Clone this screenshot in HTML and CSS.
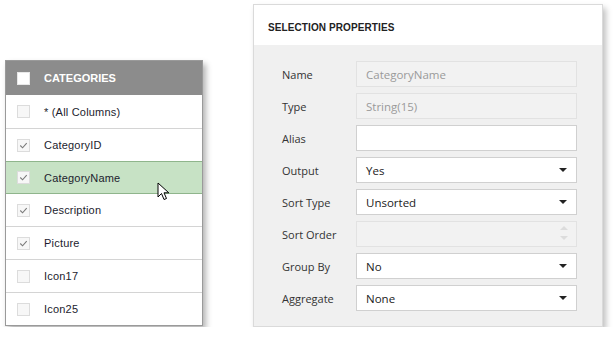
FILE: index.html
```html
<!DOCTYPE html>
<html>
<head>
    <meta charset="UTF-8">
    <title>Selection Properties</title>
    <link rel="stylesheet" href="styles.css">
</head>
<body>
    <div class="stage">
        <div class="categories">
            <div class="cat-head">
                <span class="box head-box"></span>
                <span>CATEGORIES</span>
            </div>
            <div class="cat-row"><span class="box"></span>* (All Columns)</div>
            <div class="cat-row"><span class="box"><svg viewBox="0 0 12 12"><polyline points="2.5,6 5,8.5 9.5,3.5"/></svg></span>CategoryID</div>
            <div class="cat-row selected"><span class="box"><svg viewBox="0 0 12 12"><polyline points="2.5,6 5,8.5 9.5,3.5"/></svg></span>CategoryName
                <svg class="pointer" width="14" height="20" viewBox="0 0 14 20"><path d="M1 1 L1 15 L4.5 11.5 L7 17.5 L9.5 16.5 L7 10.8 L11.8 10.8 Z" fill="#fff" stroke="#000" stroke-width="1" stroke-linejoin="miter"/></svg>
            </div>
            <div class="cat-row"><span class="box"><svg viewBox="0 0 12 12"><polyline points="2.5,6 5,8.5 9.5,3.5"/></svg></span>Description</div>
            <div class="cat-row"><span class="box"><svg viewBox="0 0 12 12"><polyline points="2.5,6 5,8.5 9.5,3.5"/></svg></span>Picture</div>
            <div class="cat-row"><span class="box"></span>Icon17</div>
            <div class="cat-row"><span class="box"></span>Icon25</div>
        </div>

        <div class="props">
            <div class="props-head">SELECTION PROPERTIES</div>
            <div class="props-body">
                <div class="prop"><label>Name</label><div class="field disabled">CategoryName</div></div>
                <div class="prop"><label>Type</label><div class="field disabled">String(15)</div></div>
                <div class="prop"><label>Alias</label><div class="field"></div></div>
                <div class="prop"><label>Output</label><div class="field select">Yes<span class="caret"></span></div></div>
                <div class="prop"><label>Sort Type</label><div class="field select">Unsorted<span class="caret"></span></div></div>
                <div class="prop"><label>Sort Order</label><div class="field disabled spin"><span class="spin-btns"><span class="up"></span><span class="down"></span></span></div></div>
                <div class="prop"><label>Group By</label><div class="field select">No<span class="caret"></span></div></div>
                <div class="prop"><label>Aggregate</label><div class="field select">None<span class="caret"></span></div></div>
            </div>
        </div>
    </div>
</body>
</html>
```
FILE: styles.css
```css
body { margin: 0; background: #fff; }
.stage { display: flex; align-items: flex-start; padding: 4px 0 0 5px; }

/* categories list */
.categories { width: 196px; margin-top: 56px; border: 1px solid #9a9a9a; background: #fff; box-shadow: 3px 4px 6px rgba(0,0,0,0.3); font-family: "Liberation Sans", Arial, sans-serif; font-size: 11px; color: #1c1c2e; }
.cat-head { height: 34px; background: #8c8c8c; color: #fff; font-weight: bold; display: flex; align-items: center; }
.cat-row { position: relative; height: 32px; border-top: 1px solid #d4d4d4; display: flex; align-items: center; letter-spacing: 0.2px; }
.cat-head + .cat-row { border-top: none; height: 33px; }
.cat-row.selected { background: #c7e2c5; border-top: 1px solid #8fb58c; border-bottom: 1px solid #8fb58c; height: 31px; }
.cat-row.selected + .cat-row { border-top: none; }
.box { width: 11px; height: 11px; border: 1px solid #dcdcdc; background: #f7f7f7; margin: 0 14px 0 11px; display: flex; }
.box svg { width: 11px; height: 11px; }
.box polyline { fill: none; stroke: #7a7a7a; stroke-width: 1.2; }
.head-box { background: #fff; border-color: #e8e8e8; }
.pointer { position: absolute; left: 151px; top: 20px; }

/* properties */
.props { width: 348px; margin-left: 50px; border: 1px solid #dadada; background: #f0f0f0; box-shadow: 3px 4px 6px rgba(0,0,0,0.25); font-family: "Open Sans", sans-serif; font-size: 11px; color: #333; }
.props-head { height: 36px; padding-top: 4px; background: #fff; display: flex; align-items: center; padding-left: 14px; font-family: "Liberation Sans", Arial, sans-serif; font-weight: bold; font-size: 10px; letter-spacing: 0.1px; color: #222; }
.props-body { padding: 16px 25px 15px 28px; display: flex; flex-direction: column; gap: 6px; }
.prop { display: flex; align-items: center; }
.prop label { width: 74px; }
.field { position: relative; flex: 1; height: 24px; border: 1px solid #d0d0d0; background: #fff; display: flex; align-items: center; padding-left: 9px; font-size: 11.5px; color: #222; }
.field.disabled { background: #f2f2f2; border-color: #e2e2e2; color: #9a9a9a; }
.caret { position: absolute; right: 9px; top: 10px; border-left: 4px solid transparent; border-right: 4px solid transparent; border-top: 4px solid #222; }
.spin-btns { position: absolute; right: 8px; top: 4px; display: flex; flex-direction: column; gap: 6px; }
.spin-btns .up { border-left: 4px solid transparent; border-right: 4px solid transparent; border-bottom: 4px solid #dcdcdc; }
.spin-btns .down { border-left: 4px solid transparent; border-right: 4px solid transparent; border-top: 4px solid #dcdcdc; }
```
